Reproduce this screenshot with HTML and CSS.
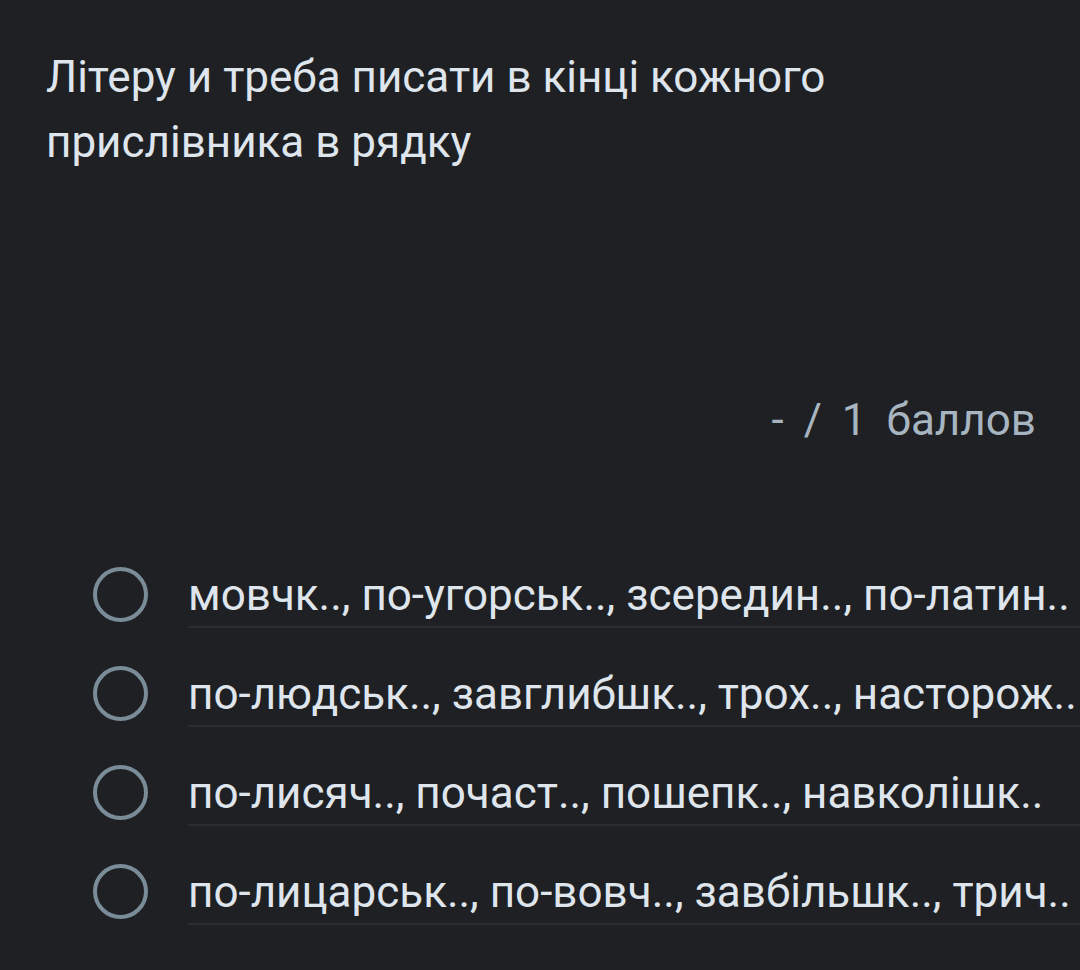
FILE: index.html
```html
<!DOCTYPE html>
<html lang="uk">
<head>
<meta charset="utf-8">
<link rel="stylesheet" href="styles.css">
</head>
<body>
<main class="page">
  <h1 class="question">Літеру и треба писати в кінці кожного прислівника в рядку</h1>
  <div class="score"><span>-</span><span>/</span><span>1</span><span>баллов</span></div>
  <ul class="options">
    <li class="option"><span class="radio"></span><span class="label">мовчк.., по-угорськ.., зсередин.., по-латин..</span></li>
    <li class="option"><span class="radio"></span><span class="label">по-людськ.., завглибшк.., трох.., насторож..</span></li>
    <li class="option"><span class="radio"></span><span class="label">по-лисяч.., почаст.., пошепк.., навколішк..</span></li>
    <li class="option"><span class="radio"></span><span class="label">по-лицарськ.., по-вовч.., завбільшк.., трич..</span></li>
  </ul>
</main>
</body>
</html>
```
FILE: styles.css
```css
html, body {
  margin: 0;
  padding: 0;
  background: #1f2023;
  overflow: hidden;
}
.page {
  width: 1080px;
  height: 970px;
  font-family: Roboto, "Noto Sans", sans-serif;
  color: #dfe5ec;
  box-sizing: border-box;
  padding-top: 45px;
}
.question {
  margin: 0 0 0 46px;
  width: 820px;
  font-size: 44px;
  font-weight: 400;
  line-height: 65px;
}
.score {
  display: flex;
  justify-content: flex-end;
  gap: 20px;
  margin-top: 220px;
  padding-right: 44px;
  font-size: 44px;
  line-height: 50px;
  color: #a7b5c1;
}
.options {
  list-style: none;
  margin: 84px 0 0 0;
  padding: 0;
}
.option {
  display: flex;
  align-items: flex-end;
  height: 99px;
}
.radio {
  flex: none;
  width: 47px;
  height: 47px;
  border: 4px solid #7a8c98;
  border-radius: 50%;
  margin: 0 40px 6px 93px;
}
.label {
  flex: 1;
  font-size: 44px;
  line-height: 50px;
  padding-bottom: 6px;
  border-bottom: 2px solid #2b2d30;
  white-space: nowrap;
  overflow: hidden;
}
```
